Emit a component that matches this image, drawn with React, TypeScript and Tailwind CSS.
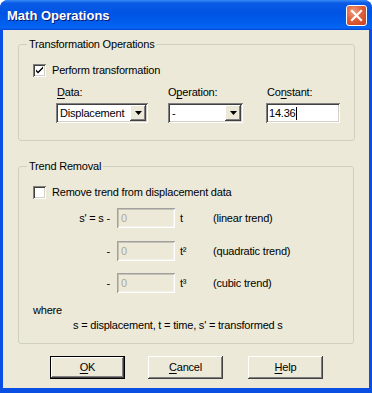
import React from 'react'

const sunken =
  'shadow-[inset_1px_1px_0_#808080,inset_-1px_-1px_0_#ffffff,inset_2px_2px_0_#404040,inset_-2px_-2px_0_#d4d0c8]'
const raised =
  'shadow-[inset_-1px_-1px_0_#404040,inset_1px_1px_0_#ffffff,inset_-2px_-2px_0_#808080,inset_2px_2px_0_#ece9d8]'

function CheckBox({ checked }: { checked?: boolean }) {
  return (
    <span className={`relative block w-[13px] h-[13px] bg-white ${sunken}`}>
      {checked && (
        <svg width="13" height="13" viewBox="0 0 13 13" className="absolute left-0 top-0">
          <path d="M3 5.5 L5 7.5 L10 2.5 L10 4.5 L5 9.5 L3 7.5 Z" fill="#000" />
        </svg>
      )}
    </span>
  )
}

function Combo({ value, width }: { value: string; width: string }) {
  return (
    <div className={`flex items-center h-[20px] bg-white pl-[4px] pr-[2px] ${width} ${sunken}`}>
      <span className="flex-1 leading-[13px]">{value}</span>
      <span className={`flex items-center justify-center w-[16px] h-[16px] bg-[#ece9d8] ${raised}`}>
        <svg width="7" height="4" viewBox="0 0 7 4">
          <path d="M0 0 H7 L3.5 4 Z" fill="#000" />
        </svg>
      </span>
    </div>
  )
}

function DisabledEdit() {
  return (
    <div className="flex items-center w-[58px] h-[20px] pl-[4px] text-[#aca899] shadow-[inset_1px_1px_0_#a0a0a0,inset_-1px_-1px_0_#ffffff,inset_2px_2px_0_#c6c3b4,inset_-2px_-2px_0_#f3f1e7]">
      0
    </div>
  )
}

function Btn({ label, hot, def }: { label: string; hot: string; def?: boolean }) {
  const rest = label.slice(1)
  return (
    <div
      className={`flex items-center justify-center w-[75px] h-[23px] bg-[#ece9d8] ${
        def ? 'border border-black' : ''
      }`}
    >
      <div className={`flex items-center justify-center w-full h-full ${raised}`}>
        <span>
          <span className="underline underline-offset-[2px]">{hot}</span>
          {rest}
        </span>
      </div>
    </div>
  )
}

function EqRow({ lead, power, trend }: { lead: string; power: string; trend: string }) {
  return (
    <div className="flex items-center">
      <span className="w-[77px] text-right">{lead}</span>
      <span className="ml-[7px]">
        <DisabledEdit />
      </span>
      <span className="ml-[5px] w-[33px]">{power}</span>
      <span>{trend}</span>
    </div>
  )
}

export default function App() {
  return (
    <div className="w-[372px] h-[393px] flex flex-col rounded-t-[8px] bg-[#0a4fe4] overflow-hidden font-['Liberation_Sans',Arial,sans-serif] text-[11px] leading-[13px] tracking-[-0.2px] text-black">
      <div className="flex items-center h-[30px] pl-[7px] pr-[5px] bg-[linear-gradient(to_bottom,#3a8cf5_0%,#0a5ae6_10%,#0054e3_45%,#0061f0_85%,#0a66f5_93%,#0044d4_100%)]">
        <span className="flex-1 text-white font-bold text-[13px] tracking-normal [text-shadow:1px_1px_0_#0a1a6a]">
          Math Operations
        </span>
        <div className="flex items-center justify-center w-[21px] h-[21px] rounded-[3px] border border-white bg-[radial-gradient(circle_at_35%_30%,#f0a081_0%,#e0603a_45%,#c8401c_100%)]">
          <svg width="13" height="13" viewBox="0 0 13 13">
            <path d="M2 2 L11 11 M11 2 L2 11" stroke="#fff" strokeWidth="2.2" strokeLinecap="square" />
          </svg>
        </div>
      </div>

      <div className="flex-1 mx-[3px] mb-[5px] bg-[#ece9d8] flex flex-col px-[15px] pt-[8px]">
        <fieldset className="border border-[#d0d0bf] rounded-[3px]">
          <legend className="ml-[8px] px-[2px]">Transformation Operations</legend>
          <div className="px-[14px] pt-[13px] pb-[17px]">
            <div className="flex items-center gap-[6px]">
              <CheckBox checked />
              <span>Perform transformation</span>
            </div>
            <div className="flex mt-[9px] ml-[23px]">
              <div className="w-[92px] flex flex-col gap-[4px]">
                <span className="pl-[1px]">
                  <span className="underline underline-offset-[2px]">D</span>ata:
                </span>
                <Combo value="Displacement" width="w-[92px]" />
              </div>
              <div className="ml-[20px] w-[75px] flex flex-col gap-[4px]">
                <span>
                  O<span className="underline underline-offset-[2px]">p</span>eration:
                </span>
                <Combo value="-" width="w-[75px]" />
              </div>
              <div className="ml-[23px] w-[74px] flex flex-col gap-[4px]">
                <span className="pl-[1px]">
                  Co<span className="underline underline-offset-[2px]">n</span>stant:
                </span>
                <div className={`flex items-center h-[20px] bg-white pl-[3px] ${sunken}`}>
                  <span>14.36</span>
                  <span className="inline-block w-px h-[13px] bg-black" />
                </div>
              </div>
            </div>
          </div>
        </fieldset>

        <fieldset className="mt-[19px] border border-[#d0d0bf] rounded-[3px]">
          <legend className="ml-[8px] px-[2px]">Trend Removal</legend>
          <div className="px-[14px] pt-[13px] pb-[10px]">
            <div className="flex items-center gap-[6px]">
              <CheckBox />
              <span>Remove trend from displacement data</span>
            </div>
            <div className="mt-[9px]">
              <EqRow lead="s' = s -" power="t" trend="(linear trend)" />
            </div>
            <div className="mt-[13px]">
              <EqRow lead="-" power="t²" trend="(quadratic trend)" />
            </div>
            <div className="mt-[12px]">
              <EqRow lead="-" power="t³" trend="(cubic trend)" />
            </div>
            <div className="mt-[10px] leading-[15px]">where</div>
            <div className="leading-[15px] pl-[40px]">s = displacement, t = time, s' = transformed s</div>
          </div>
        </fieldset>

        <div className="flex mt-[12px] pl-[32px]">
          <Btn label="OK" hot="O" def />
          <span className="ml-[23px]">
            <Btn label="Cancel" hot="C" />
          </span>
          <span className="ml-[25px]">
            <Btn label="Help" hot="H" />
          </span>
        </div>
      </div>
    </div>
  )
}
